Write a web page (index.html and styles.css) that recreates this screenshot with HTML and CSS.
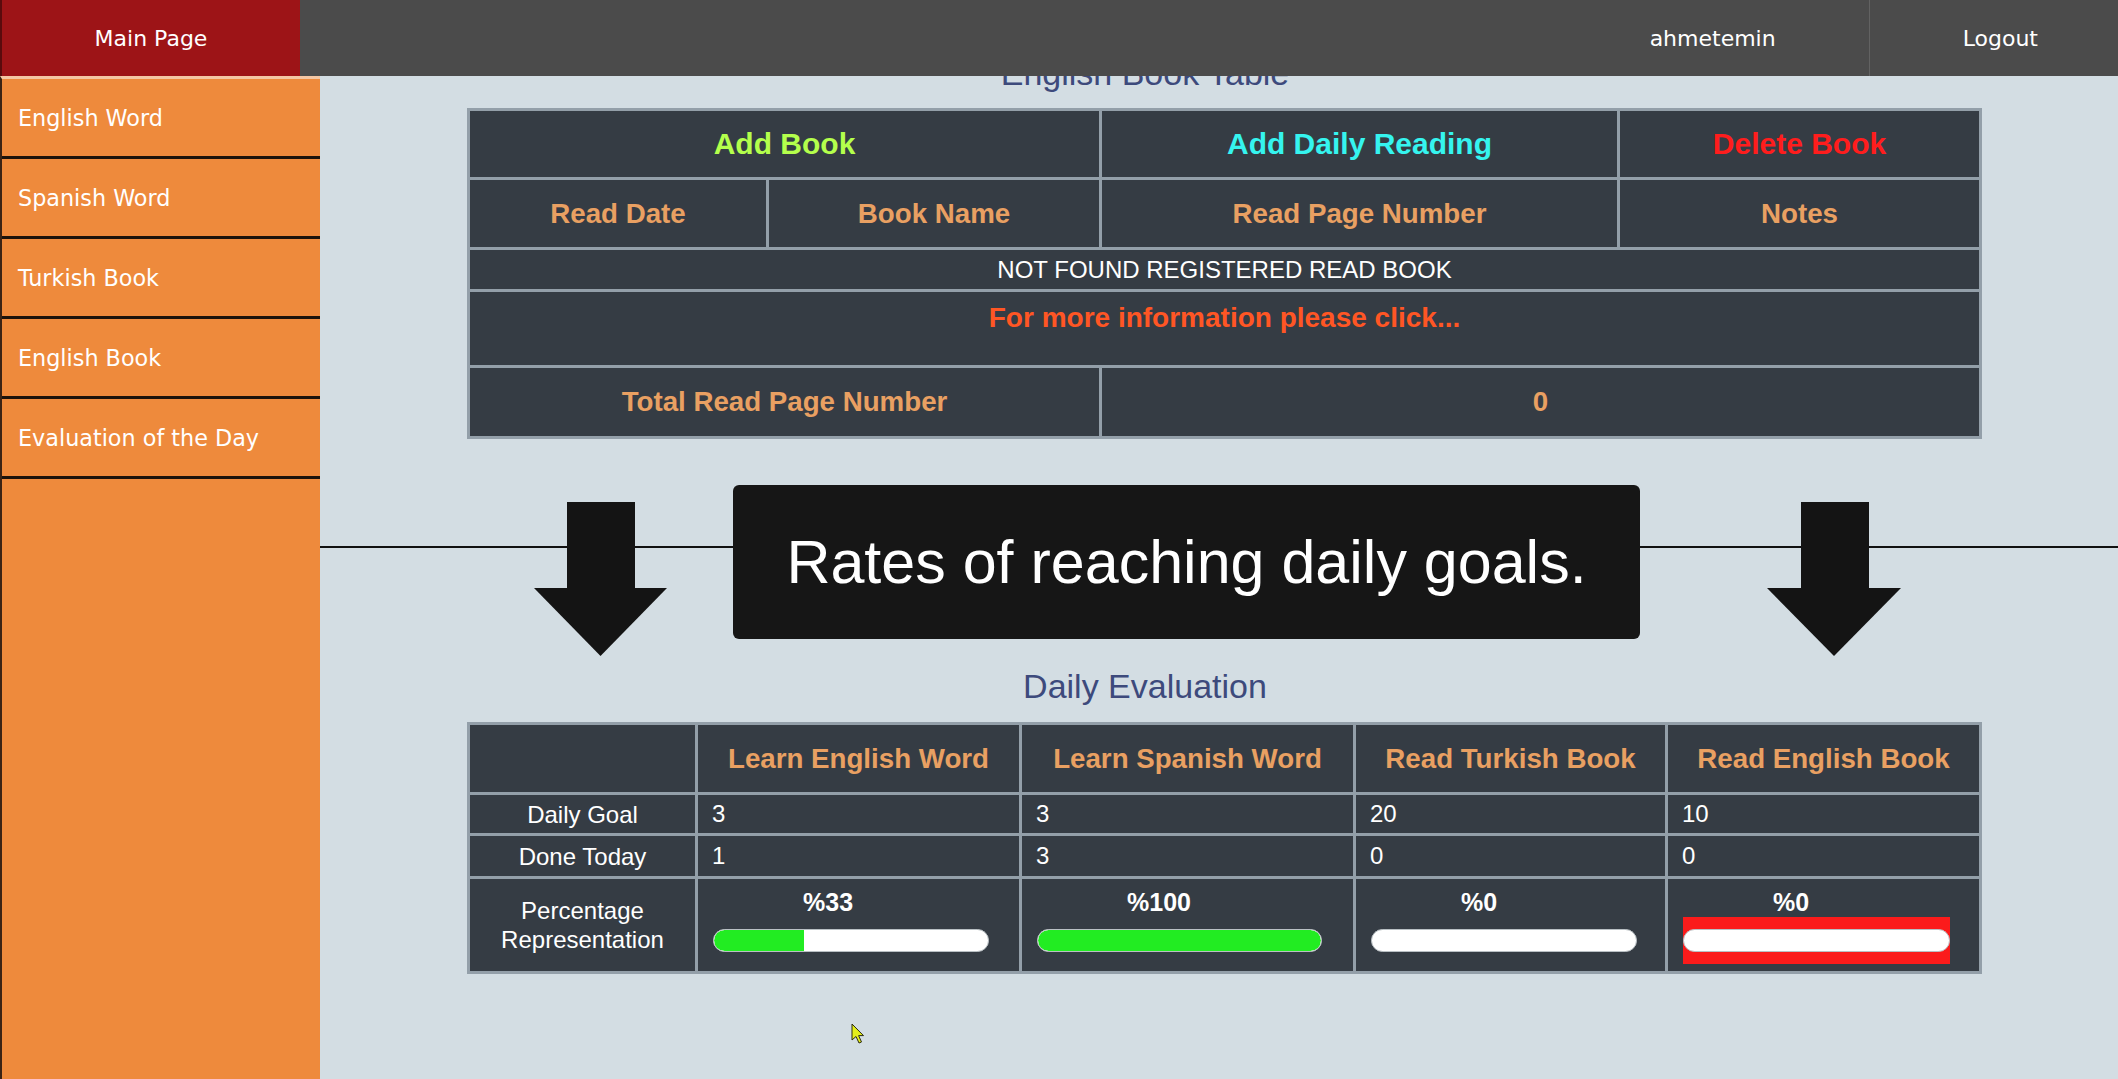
FILE: index.html
```html
<!DOCTYPE html>
<html lang="en">
<head>
<meta charset="utf-8">
<title>Daily Evaluation</title>
<link rel="stylesheet" href="styles.css">
</head>
<body>
<header class="topbar">
  <a class="brand">Main Page</a>
  <div class="spacer"></div>
  <a class="user">ahmetemin</a>
  <a class="logout">Logout</a>
</header>
<div class="app">
  <nav class="sidebar">
    <a class="nav-item">English Word</a>
    <a class="nav-item">Spanish Word</a>
    <a class="nav-item">Turkish Book</a>
    <a class="nav-item">English Book</a>
    <a class="nav-item">Evaluation of the Day</a>
  </nav>
  <main class="main">
    <h2 class="section-title">English Book Table</h2>
    <table class="data-table book-table">
      <colgroup>
        <col class="bc1"><col class="bc2"><col class="bc3"><col class="bc4">
      </colgroup>
      <tr class="r-actions">
        <th colspan="2" class="act act-add">Add Book</th>
        <th class="act act-daily">Add Daily Reading</th>
        <th class="act act-delete">Delete Book</th>
      </tr>
      <tr class="r-head">
        <th class="hd">Read Date</th>
        <th class="hd">Book Name</th>
        <th class="hd">Read Page Number</th>
        <th class="hd">Notes</th>
      </tr>
      <tr class="r-empty">
        <td colspan="4" class="center">NOT FOUND REGISTERED READ BOOK</td>
      </tr>
      <tr class="r-info">
        <td colspan="4" class="info">For more information please click...</td>
      </tr>
      <tr class="r-total">
        <th colspan="2" class="hd">Total Read Page Number</th>
        <th colspan="2" class="hd">0</th>
      </tr>
    </table>

    <div class="divider-row">
      <svg class="arrow" viewBox="0 0 133 154" width="133" height="154">
        <rect x="33" y="0" width="68" height="87" fill="#141414"/>
        <polygon points="0,86 133,86 66.5,154" fill="#141414"/>
      </svg>
      <div class="banner">Rates of reaching daily goals.</div>
      <svg class="arrow arrow-right" viewBox="0 0 134 154" width="134" height="154">
        <rect x="34" y="0" width="68" height="87" fill="#141414"/>
        <polygon points="0,86 134,86 67,154" fill="#141414"/>
      </svg>
    </div>

    <h2 class="section-title second">Daily Evaluation</h2>
    <table class="data-table eval-table">
      <colgroup>
        <col class="ec1"><col class="ec2"><col class="ec3"><col class="ec4"><col class="ec5">
      </colgroup>
      <tr class="e-head">
        <th></th>
        <th class="hd">Learn English Word</th>
        <th class="hd">Learn Spanish Word</th>
        <th class="hd">Read Turkish Book</th>
        <th class="hd">Read English Book</th>
      </tr>
      <tr class="e-goal">
        <td class="label">Daily Goal</td>
        <td class="val">3</td>
        <td class="val">3</td>
        <td class="val">20</td>
        <td class="val">10</td>
      </tr>
      <tr class="e-done">
        <td class="label">Done Today</td>
        <td class="val">1</td>
        <td class="val">3</td>
        <td class="val">0</td>
        <td class="val">0</td>
      </tr>
      <tr class="e-pct">
        <td class="label">Percentage<br>Representation</td>
        <td class="pct">
          <div class="pct-label">%33</div>
          <div class="bar-wrap"><div class="bar"><div class="fill" style="width:33%"></div></div></div>
        </td>
        <td class="pct">
          <div class="pct-label">%100</div>
          <div class="bar-wrap"><div class="bar"><div class="fill full" style="width:100%"></div></div></div>
        </td>
        <td class="pct">
          <div class="pct-label">%0</div>
          <div class="bar-wrap"><div class="bar"><div class="fill" style="width:0%"></div></div></div>
        </td>
        <td class="pct">
          <div class="pct-label">%0</div>
          <div class="bar-wrap alert"><div class="bar"><div class="fill" style="width:0%"></div></div></div>
        </td>
      </tr>
    </table>
  </main>
</div>
<svg class="cursor" viewBox="0 0 14 21" width="14" height="21">
  <path d="M1,1 L1,17 L5,13.5 L8,20 L10.5,19 L7.6,12.6 L12.5,12.6 Z" fill="#e4ee1a" stroke="#2a2a10" stroke-width="1"/>
</svg>
</body>
</html>
```

FILE: styles.css
```css
* { box-sizing: border-box; }
html, body { margin: 0; padding: 0; }
body {
  background: #d3dde3;
  font-family: "Liberation Sans", Arial, sans-serif;
  overflow: hidden;
}

/* top bar */
.topbar {
  position: fixed;
  top: 0; left: 0; right: 0;
  height: 76px;
  background: #4b4b4b;
  display: flex;
  align-items: stretch;
  z-index: 10;
  font-family: "DejaVu Sans", Verdana, sans-serif;
  font-size: 22px;
  color: #fff;
}
.brand {
  width: 300px;
  background: #9d1417;
  border-left: 2px solid #5a0b0d;
  display: flex;
  align-items: center;
  justify-content: center;
}
.spacer { flex: 1; }
.user {
  display: flex;
  align-items: center;
  padding: 0 93px;
  border-right: 1px solid #626262;
}
.logout {
  display: flex;
  align-items: center;
  padding: 0 80px 0 93px;
}

/* layout */
.app { display: flex; min-height: 100vh; }
.sidebar {
  width: 320px;
  flex: none;
  margin-top: 76px;
  background: #ee8a3c;
  border-top: 3px solid #f4c7a4;
  border-left: 2px solid #3a2314;
  display: flex;
  flex-direction: column;
}
.nav-item {
  display: flex;
  align-items: center;
  height: 80px;
  padding-left: 16px;
  border-bottom: 3px solid #1c130b;
  color: #fff;
  font-family: "DejaVu Sans", Verdana, sans-serif;
  font-size: 22.3px;
}

.main {
  flex: 1;
  padding-top: 54px;
}
.section-title {
  margin: 0 148px 16px 0;
  text-align: center;
  font-size: 34px;
  line-height: 38px;
  font-weight: normal;
  color: #3d4a7c;
}
.section-title.second { margin-top: 11px; margin-bottom: 17px; }

/* tables */
.data-table {
  margin-left: 147px;
  width: 1515px;
  table-layout: fixed;
  border-collapse: separate;
  border-spacing: 3px;
  background: #939fa9;
}
.data-table th,
.data-table td {
  background: #353c44;
  padding: 0;
  text-align: center;
  color: #fff;
  font-size: 24px;
}
.bc1 { width: 296px; }
.bc2 { width: 330px; }
.bc3 { width: 515px; }
.bc4 { width: 359px; }

.r-actions { height: 66px; }
.r-head { height: 67px; }
.r-empty { height: 39px; }
.r-info { height: 73px; }
.r-total { height: 68px; }

.data-table .act { font-size: 30px; font-weight: bold; }
.data-table .act-add { color: #b4ff4c; }
.data-table .act-daily { color: #35f4ef; }
.data-table .act-delete { color: #ff1d1d; }
.data-table .hd { font-size: 27.7px; font-weight: bold; color: #e9a062; }
.data-table td.info {
  vertical-align: top;
  padding-top: 10px;
  font-size: 28px;
  font-weight: bold;
  color: #ff5624;
}

/* divider with banner */
.divider-row {
  position: relative;
  margin-top: 46px;
  height: 171px;
  display: flex;
  align-items: flex-start;
  padding-left: 214px;
}
.divider-row::before {
  content: "";
  position: absolute;
  left: 0; right: 0;
  top: 61px;
  height: 2px;
  background: #111;
}
.arrow {
  position: relative;
  z-index: 1;
  margin-top: 17px;
  flex: none;
}
.arrow-right { margin-left: 127px; }
.banner {
  position: relative;
  z-index: 1;
  margin-left: 66px;
  width: 907px;
  height: 154px;
  flex: none;
  background: #161616;
  border-radius: 6px;
  color: #fff;
  font-size: 61px;
  display: flex;
  align-items: center;
  justify-content: center;
}

/* evaluation table */
.ec1 { width: 225px; }
.ec2 { width: 321px; }
.ec3 { width: 331px; }
.ec4 { width: 309px; }
.ec5 { width: 311px; }
.e-head { height: 67px; }
.e-goal { height: 38px; }
.e-done { height: 40px; }
.e-pct { height: 92px; }

.data-table td.label { line-height: 29px; }
.data-table td.val { text-align: left; padding-left: 14px; }
.data-table td.pct {
  vertical-align: top;
  text-align: left;
  padding: 8px 0 0 15px;
}
.pct-label {
  padding-left: 90px;
  font-size: 25px;
  font-weight: bold;
  line-height: 30px;
}
.bar-wrap {
  width: calc((100% + 15px) * 0.86);
  padding: 12px 0;
}
.bar-wrap.alert { background: #fb1b1b; }
.bar {
  height: 23px;
  background: #fff;
  border: 1px solid #b9c0c4;
  border-radius: 12px;
  overflow: hidden;
}
.fill {
  height: 100%;
  background: #22ec22;
  border-radius: 11px 0 0 11px;
}
.fill.full { border-radius: 11px; }

.cursor {
  position: fixed;
  left: 851px;
  top: 1023px;
  z-index: 20;
}
```
